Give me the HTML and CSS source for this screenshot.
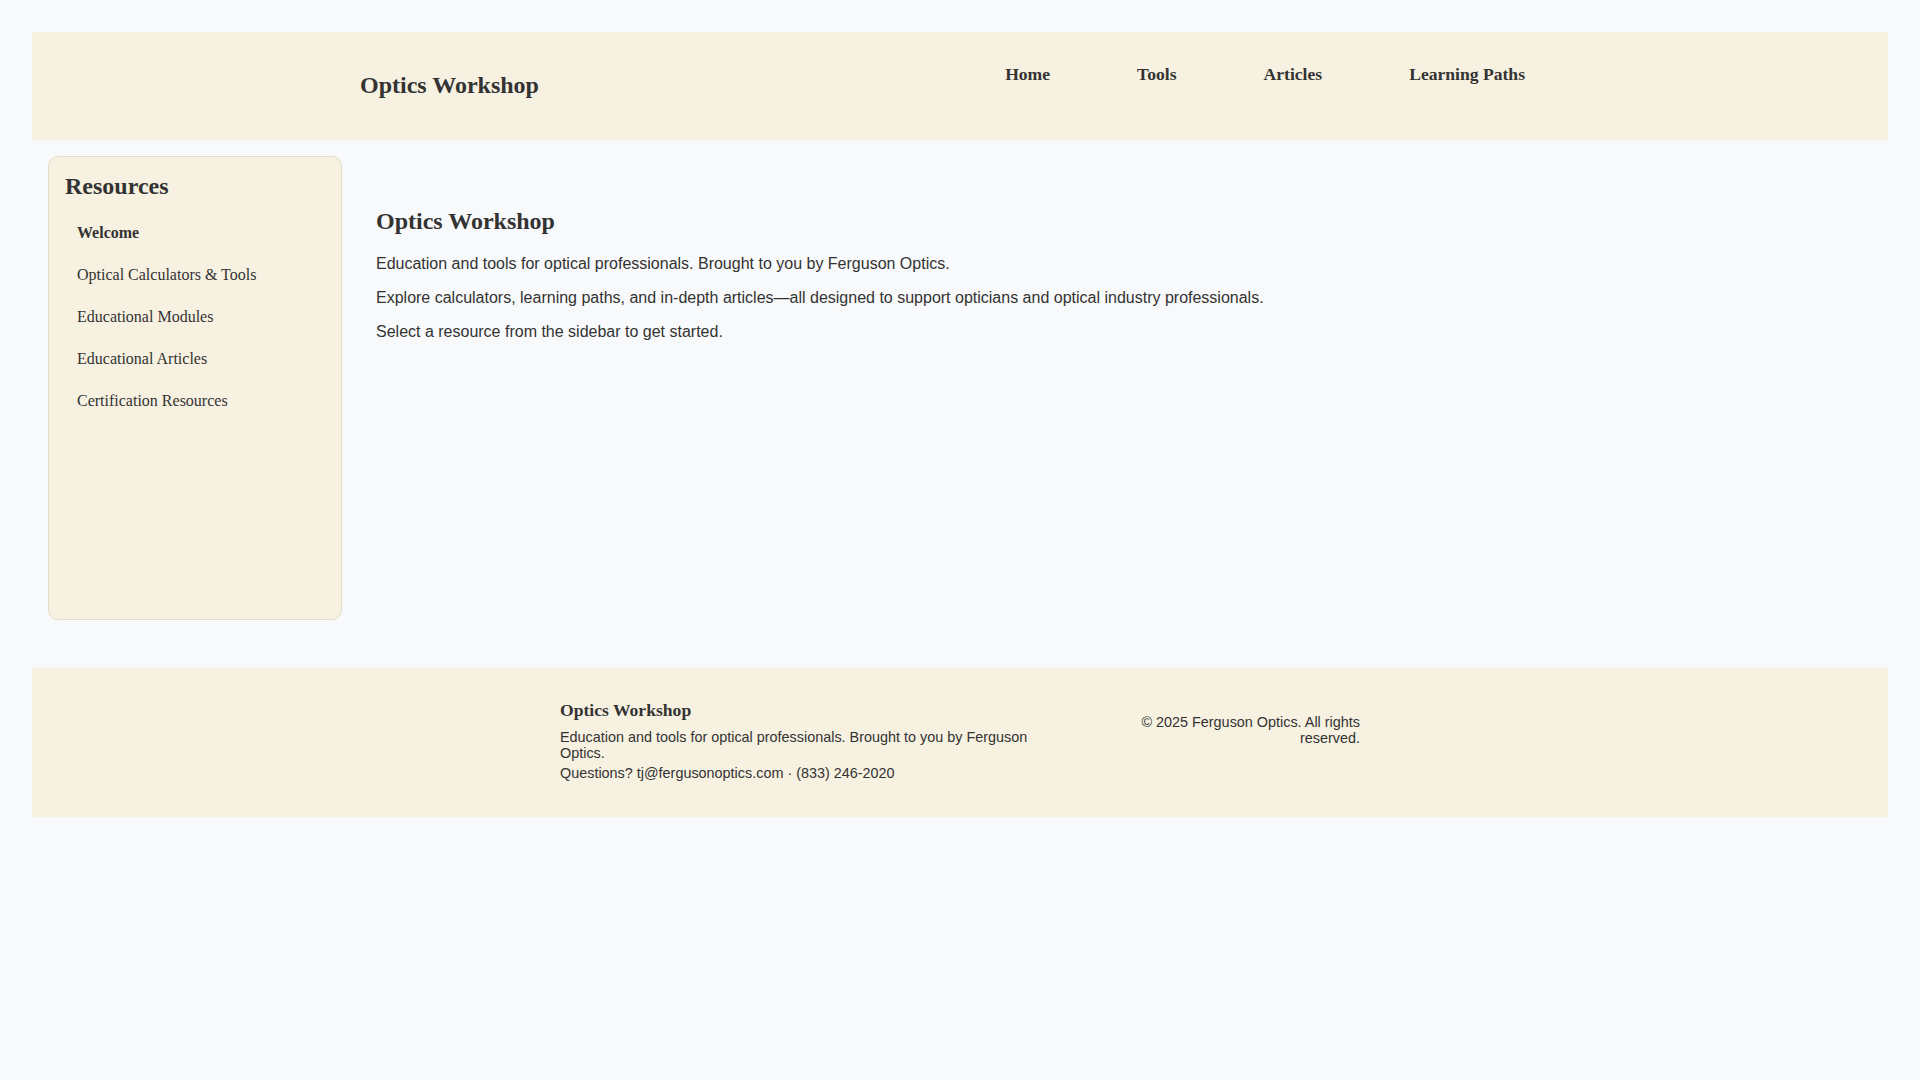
FILE: index.html
```html
<!DOCTYPE html>
<html lang="en">
<head>
<meta charset="utf-8">
<title>Optics Workshop</title>
<link rel="stylesheet" href="styles.css">
</head>
<body>
<header class="site-header">
  <div class="header-inner">
    <h1 class="brand">Optics Workshop</h1>
    <nav class="main-nav">
      <a href="#">Home</a>
      <a href="#">Tools</a>
      <a href="#">Articles</a>
      <a href="#">Learning Paths</a>
    </nav>
  </div>
</header>
<div class="layout">
  <aside class="sidebar">
    <h2 class="sidebar-title">Resources</h2>
    <a class="side-link active" href="#">Welcome</a>
    <a class="side-link" href="#">Optical Calculators &amp; Tools</a>
    <a class="side-link" href="#">Educational Modules</a>
    <a class="side-link" href="#">Educational Articles</a>
    <a class="side-link" href="#">Certification Resources</a>
  </aside>
  <main class="content">
    <h2 class="content-title">Optics Workshop</h2>
    <p>Education and tools for optical professionals. Brought to you by Ferguson Optics.</p>
    <p>Explore calculators, learning paths, and in-depth articles—all designed to support opticians and optical industry professionals.</p>
    <p>Select a resource from the sidebar to get started.</p>
  </main>
</div>
<footer class="site-footer">
  <div class="footer-inner">
    <div class="footer-info">
      <h3 class="footer-title">Optics Workshop</h3>
      <p>Education and tools for optical professionals. Brought to you by Ferguson Optics.</p>
      <p>Questions? tj@fergusonoptics.com · (833) 246-2020</p>
    </div>
    <div class="footer-legal">
      <p>© 2025 Ferguson Optics. All rights reserved.</p>
    </div>
  </div>
</footer>
</body>
</html>
```
FILE: styles.css
```css
* { box-sizing: border-box; }

body {
  margin: 0;
  padding: 32px;
  background: #f8f9fa;
  color: #333333;
  font-family: "Liberation Sans", Arial, sans-serif;
  font-size: 16px;
}

a { color: #333333; text-decoration: none; }

.site-header {
  background: #f7f1e1;
  padding: 32px 0 33px;
}

.header-inner {
  width: 1200px;
  margin: 0 auto;
  display: flex;
  justify-content: space-between;
  align-items: flex-start;
}

.brand {
  margin: 0;
  padding: 8px 0;
  font-family: "Liberation Serif", "Times New Roman", serif;
  font-size: 24px;
  font-weight: bold;
}

.main-nav {
  display: flex;
  gap: 87px;
  margin-right: 35px;
  font-family: "Liberation Serif", "Times New Roman", serif;
  font-size: 17.6px;
  font-weight: bold;
}

.layout {
  display: flex;
  align-items: flex-start;
  gap: 34px;
  padding: 16px 0 16px 16px;
}

.sidebar {
  flex: 0 0 294px;
  width: 294px;
  min-height: 464px;
  background: #f7f1e1;
  border: 1px solid #e6dcc4;
  border-radius: 10px;
  padding: 16px;
  font-family: "Liberation Serif", "Times New Roman", serif;
}

.sidebar-title {
  margin: 0 0 12px;
  font-size: 24px;
  font-weight: bold;
}

.side-link {
  display: block;
  padding: 12px;
  font-size: 16px;
}

.side-link.active { font-weight: bold; }

.content {
  flex: 1;
  padding: 32px 0;
}

.content-title {
  margin: 0.83em 0;
  font-family: "Liberation Serif", "Times New Roman", serif;
  font-size: 24px;
  font-weight: bold;
}

.content p { margin: 16px 0; }

.site-footer {
  margin-top: 32px;
  background: #f7f1e1;
  padding: 32px 0;
  font-size: 14.4px;
}

.footer-inner {
  width: 800px;
  margin: 0 auto;
  display: grid;
  grid-template-columns: 2fr 1fr;
  gap: 32px;
}

.footer-title {
  margin: 0 0 8px;
  font-family: "Liberation Serif", "Times New Roman", serif;
  font-size: 17.6px;
  font-weight: bold;
}

.footer-info p { margin: 0 0 4px; }

.footer-legal p {
  margin: 14.4px 0 0;
  text-align: right;
}
```
